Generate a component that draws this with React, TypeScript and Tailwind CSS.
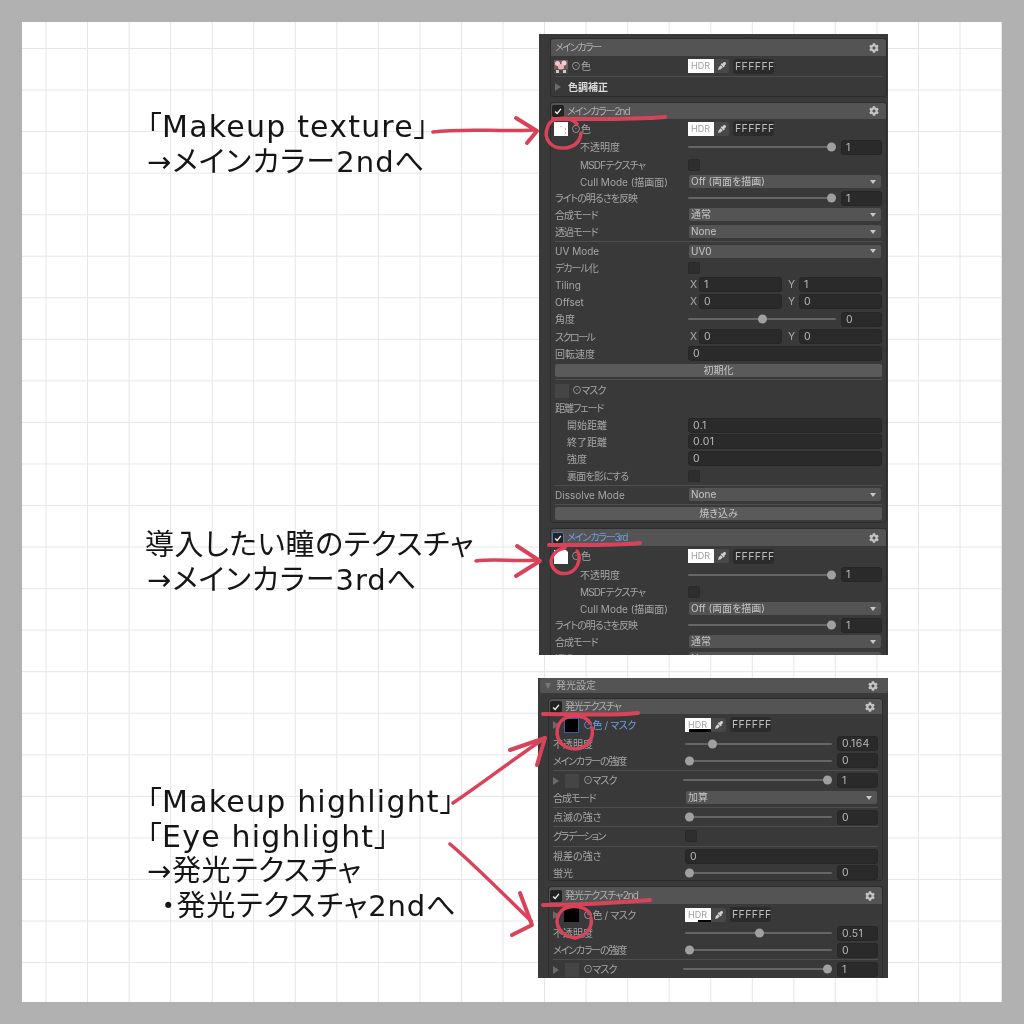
import React from "react";
import { FaCog, FaEyeDropper } from "react-icons/fa";

const field =
  "h-[15px] rounded-[3px] bg-[#2a2a2a] border border-[#262626] text-[#b8b8b8] text-[10.5px] leading-[13px] pl-[4px] tracking-[0.3px]";

function Num({ v }: { v: string }) {
  return <div className={`${field} w-[41px] shrink-0`}>{v}</div>;
}
function Slider({ p, v, wide }: { p: number; v: string; wide?: boolean }) {
  return (
    <div className={`flex items-center ${wide ? "-ml-[2px]" : ""}`}>
      <div className="relative flex-1 h-[2px] bg-[#666666] rounded-full">
        <div
          className="absolute top-1/2 -translate-y-1/2 w-[9px] h-[9px] rounded-full bg-[#a0a0a0]"
          style={{ left: `calc(${p} * (100% - 9px))` }}
        />
      </div>
      <div className="ml-[5px]">
        <Num v={v} />
      </div>
    </div>
  );
}
function Select({ v }: { v: string }) {
  return (
    <div className="mx-[1px] h-[13px] rounded-[2px] bg-[#545454] text-[#c6c6c6] text-[10px] leading-[13px] pl-[2px] flex items-center justify-between pr-[5px]">
      <span>{v}</span>
      <span className="block w-0 h-0 border-l-[3.5px] border-r-[3.5px] border-t-[4px] border-l-transparent border-r-transparent border-t-[#c8c8c8]" />
    </div>
  );
}
function Field({ v }: { v: string }) {
  return <div className={`${field} w-full`}>{v}</div>;
}
function Check() {
  return <div className="w-[12px] h-[12px] rounded-[2px] bg-[#2e2e2e] border border-[#2a2a2a]" />;
}
function XY({ x, y }: { x: string; y: string }) {
  return (
    <div className="flex items-center text-[#a8a8a8] text-[10.5px]">
      <span className="w-[11px] pl-[2px]">X</span>
      <div className={`${field} w-[83px]`}>{x}</div>
      <span className="w-[17px] pl-[6px]">Y</span>
      <div className={`${field} w-[83px]`}>{y}</div>
    </div>
  );
}
function Btn({ t }: { t: string }) {
  return (
    <div className="h-[13px] rounded-[2px] bg-[#5a5a5a] text-[#c6c6c6] text-[10px] leading-[13px] text-center">
      {t}
    </div>
  );
}
function Color({ partial }: { partial?: number }) {
  return (
    <div className="flex items-center">
      <div className="relative w-[26px] h-[14px] bg-white text-[#a0a0a0] text-[9px] leading-[14px] pl-[3px] overflow-hidden">
        HDR
        {partial === 1 && <div className="absolute left-[4px] right-0 bottom-0 h-[3px] bg-black" />}
        {partial === 2 && <div className="absolute left-[13px] right-0 bottom-0 h-[2px] bg-black" />}
      </div>
      <div className="w-[15px] h-[14px] bg-[#484848] rounded-r-[2px] flex items-center justify-center">
        <FaEyeDropper className="text-[#d0d0d0] w-[8px] h-[8px]" />
      </div>
      <div className="ml-[4px] w-[41px] h-[15px] rounded-[3px] bg-[#2b2b2b] text-[#bdbdbd] text-[10.5px] leading-[15px] pl-[2px] tracking-[0.4px]">
        FFFFFF
      </div>
    </div>
  );
}
function Sep({ h = "h-[2px]" }: { h?: string }) {
  return (
    <div className={`${h} flex items-center`}>
      <div className="w-full h-px bg-[#4e4e4e]" />
    </div>
  );
}
function Row({
  h = "h-[17px]",
  label,
  indent = "",
  children,
  lw = "w-[133px]",
}: {
  h?: string;
  label: React.ReactNode;
  indent?: string;
  children?: React.ReactNode;
  lw?: string;
}) {
  return (
    <div className={`${h} flex items-center`}>
      <div className={`${lw} ${indent} shrink-0 pt-[1px] text-[#a6a6a6] text-[10px] whitespace-nowrap flex items-center`}>
        {label}
      </div>
      <div className="flex-1 min-w-0">{children}</div>
    </div>
  );
}
function Header({
  t,
  h,
  check,
  blue,
  tr = "tracking-[-1.1px]",
}: {
  t: string;
  h: string;
  check?: boolean;
  blue?: boolean;
  tr?: string;
}) {
  return (
    <div className={`${h} bg-[#545454] rounded-t-[3px] flex items-center pl-[1px] pr-[7px]`}>
      {check && (
        <div
          className={`w-[12px] h-[12px] rounded-[2px] bg-[#222222] flex items-center justify-center ${
            blue ? "border border-[#4a76b8]" : ""
          }`}
        >
          <svg viewBox="0 0 12 12" className="w-[10px] h-[10px]">
            <path d="M2.5 6.5 L5 9 L9.5 3.5" fill="none" stroke="#f0f0f0" strokeWidth="1.6" />
          </svg>
        </div>
      )}
      <span className={`ml-[3px] text-[10px] ${tr} ${blue ? "text-[#6f9fe0]" : "text-[#b0b0b0]"}`}>{t}</span>
      <FaCog className="ml-auto text-[#c4c4c4] w-[10px] h-[10px]" />
    </div>
  );
}
function Sec({ children, head }: { children: React.ReactNode; head: React.ReactNode }) {
  return (
    <div className="border border-[#2c2c2c] rounded-[3px]">
      {head}
      <div className="px-[4px]">{children}</div>
    </div>
  );
}
function Swatch({ kind }: { kind: "tex" | "white" | "white2" | "black" | "blue" | "dim" }) {
  if (kind === "tex")
    return (
      <svg viewBox="0 0 14 14" className="w-[14px] h-[14px] shrink-0">
        <rect width="14" height="14" fill="#6b5f60" />
        <circle cx="3.5" cy="3.5" r="2.5" fill="#f3c9cf" />
        <circle cx="10" cy="3" r="2.5" fill="#f2d0d4" />
        <circle cx="7" cy="7" r="3" fill="#eab6be" />
        <rect y="9.5" width="14" height="4.5" fill="#4a4344" />
        <rect x="2" y="10" width="3" height="3" fill="#cfc7c7" />
        <rect x="9" y="10" width="3" height="3" fill="#d9c2c5" />
      </svg>
    );
  if (kind === "white")
    return (
      <svg viewBox="0 0 14 14" className="w-[14px] h-[14px] shrink-0">
        <rect width="14" height="14" fill="#ffffff" />
        <rect x="6" y="4" width="2" height="1" fill="#f0b4c0" />
        <rect x="11" y="6" width="1" height="2" fill="#f0a0b0" />
        <rect x="11" y="10" width="1" height="2" fill="#f0a0b0" />
      </svg>
    );
  if (kind === "white2")
    return (
      <svg viewBox="0 0 14 14" className="w-[14px] h-[14px] shrink-0">
        <rect width="14" height="14" fill="#ffffff" />
        <path d="M12 0 L14 0 L14 2 Z" fill="#383838" />
      </svg>
    );
  if (kind === "black") return <div className="w-[15px] h-[14px] shrink-0 bg-black" />;
  if (kind === "blue") return <div className="w-[15px] h-[15px] shrink-0 bg-black border border-[#3a5fa8]" />;
  return <div className="w-[14px] h-[14px] shrink-0 bg-[#454545]" />;
}
function Tri() {
  return (
    <span className="block w-0 h-0 border-t-[4px] border-b-[4px] border-l-[6px] border-t-transparent border-b-transparent border-l-[#6a6a6a] shrink-0" />
  );
}
function SwatchLabel({ kind, text }: { kind: "tex" | "white" | "white2"; text: string }) {
  return (
    <span className="flex items-center -ml-[1px]">
      <Swatch kind={kind} />
      <span className="ml-[3px] text-[#a6a6a6]">⊙{text}</span>
    </span>
  );
}
function EmitLabel({ kind, blue }: { kind: "black" | "blue"; blue?: boolean }) {
  return (
    <span className="flex items-center">
      <Tri />
      <span className="ml-[5px]">
        <Swatch kind={kind} />
      </span>
      <span className={`ml-[4px] tracking-[-0.4px] ${blue ? "text-[#6f9fe0]" : "text-[#a6a6a6]"}`}>⊙色 / マスク</span>
    </span>
  );
}
function MaskLabel() {
  return (
    <span className="flex items-center">
      <Tri />
      <span className="ml-[6px]">
        <Swatch kind="dim" />
      </span>
      <span className="ml-[4px] tracking-[-0.8px]">⊙マスク</span>
    </span>
  );
}

const panelFont =
  "font-['Inter','Noto_Sans_CJK_JP',sans-serif] [font-feature-settings:'palt'] blur-[0.45px]";

function PanelA() {
  return (
    <div
      className={`absolute left-[539px] top-[34px] w-[349px] h-[621px] overflow-hidden bg-[#393939] pt-[4px] pl-[11px] pr-[1px] ${panelFont}`}
    >
      <Sec head={<Header t="メインカラー" h="h-[17px]" tr="tracking-[-1.4px]" />}>
        <Row h="h-[20px]" label={<SwatchLabel kind="tex" text="色" />}>
          <Color />
        </Row>
        <Sep h="h-px" />
        <Row
          h="h-[19px]"
          label={
            <span className="flex items-center text-[#dcdcdc] font-bold">
              <Tri />
              <span className="ml-[7px]">色調補正</span>
            </span>
          }
        />
      </Sec>
      <div className="mt-[5px]">
        <Sec head={<Header t="メインカラー2nd" h="h-[16px]" check />}>
          <Row h="h-[19px]" label={<SwatchLabel kind="white" text="色" />}>
            <Color />
          </Row>
          <Row h="h-[18px]" indent="pl-[25px]" label="不透明度">
            <Slider p={1} v="1" />
          </Row>
          <Row indent="pl-[25px] tracking-[-0.8px]" label="MSDFテクスチャ">
            <Check />
          </Row>
          <Row indent="pl-[25px]" label="Cull Mode (描画面)">
            <Select v="Off (両面を描画)" />
          </Row>
          <Row h="h-[16px]" indent="tracking-[-1px]" label="ライトの明るさを反映">
            <Slider p={1} v="1" />
          </Row>
          <Row indent="tracking-[-0.9px]" label="合成モード">
            <Select v="通常" />
          </Row>
          <Row indent="tracking-[-0.9px]" label="透過モード">
            <Select v="None" />
          </Row>
          <Sep />
          <Row h="h-[18px]" label="UV Mode">
            <Select v="UV0" />
          </Row>
          <Row h="h-[16px]" indent="tracking-[-1px]" label="デカール化">
            <Check />
          </Row>
          <Row label="Tiling">
            <XY x="1" y="1" />
          </Row>
          <Row label="Offset">
            <XY x="0" y="0" />
          </Row>
          <Row h="h-[18px]" label="角度">
            <Slider p={0.5} v="0" />
          </Row>
          <Row indent="tracking-[-1.5px]" label="スクロール">
            <XY x="0" y="0" />
          </Row>
          <Row label="回転速度">
            <Field v="0" />
          </Row>
          <div className="h-[16px] flex items-center">
            <div className="w-full">
              <Btn t="初期化" />
            </div>
          </div>
          <Sep h="h-[3px]" />
          <Row
            h="h-[18px]"
            label={
              <span className="flex items-center">
                <Swatch kind="dim" />
                <span className="ml-[3px] tracking-[-0.8px]">⊙マスク</span>
              </span>
            }
          />
          <Row h="h-[18px]" indent="tracking-[-1px]" label="距離フェード" />
          <Row h="h-[16px]" indent="pl-[12px]" label="開始距離">
            <Field v="0.1" />
          </Row>
          <Row indent="pl-[12px]" label="終了距離">
            <Field v="0.01" />
          </Row>
          <Row indent="pl-[12px]" label="強度">
            <Field v="0" />
          </Row>
          <Row indent="pl-[12px] tracking-[-0.8px]" label="裏面を影にする">
            <Check />
          </Row>
          <Sep />
          <Row label="Dissolve Mode">
            <Select v="None" />
          </Row>
          <Sep />
          <div className="h-[17px] flex items-center">
            <div className="w-full">
              <Btn t="焼き込み" />
            </div>
          </div>
        </Sec>
      </div>
      <div className="mt-[5px]">
        <Sec head={<Header t="メインカラー3rd" h="h-[17px]" check blue />}>
          <Row h="h-[20px]" label={<SwatchLabel kind="white2" text="色" />}>
            <Color />
          </Row>
          <Row indent="pl-[25px]" label="不透明度">
            <Slider p={1} v="1" />
          </Row>
          <Row indent="pl-[25px] tracking-[-0.8px]" label="MSDFテクスチャ">
            <Check />
          </Row>
          <Row indent="pl-[25px]" label="Cull Mode (描画面)">
            <Select v="Off (両面を描画)" />
          </Row>
          <Row h="h-[16px]" indent="tracking-[-1px]" label="ライトの明るさを反映">
            <Slider p={1} v="1" />
          </Row>
          <Row indent="tracking-[-0.9px]" label="合成モード">
            <Select v="通常" />
          </Row>
          <Row indent="tracking-[-0.9px]" label="透過モード">
            <Select v="None" />
          </Row>
        </Sec>
      </div>
    </div>
  );
}

function PanelB() {
  return (
    <div
      className={`absolute left-[538px] top-[678px] w-[350px] h-[300px] overflow-hidden bg-[#393939] pl-[10px] pr-[5px] ${panelFont}`}
    >
      <div className="-ml-[8px] -mr-[5px] h-[15px] bg-[#545454] rounded-[2px] flex items-center pl-[5px] pr-[10px]">
        <span className="block w-0 h-0 border-l-[3.5px] border-r-[3.5px] border-t-[6px] border-l-transparent border-r-transparent border-t-[#777777]" />
        <span className="ml-[5px] text-[10px] text-[#b0b0b0]">発光設定</span>
        <FaCog className="ml-auto text-[#c4c4c4] w-[10px] h-[10px]" />
      </div>
      <div className="mt-[5px]">
        <Sec head={<Header t="発光テクスチャ" h="h-[15px]" check tr="tracking-[-1.2px]" />}>
          <Row h="h-[21px]" lw="w-[132px]" label={<EmitLabel kind="blue" blue />}>
            <Color partial={1} />
          </Row>
          <Row lw="w-[132px]" label="不透明度">
            <Slider p={0.17} v="0.164" />
          </Row>
          <Row lw="w-[132px]" indent="tracking-[-1.2px]" label="メインカラーの強度">
            <Slider p={0} v="0" />
          </Row>
          <Sep />
          <Row h="h-[18px]" lw="w-[132px]" label={<MaskLabel />}>
            <Slider p={1} v="1" wide />
          </Row>
          <Row lw="w-[132px]" indent="tracking-[-0.9px]" label="合成モード">
            <Select v="加算" />
          </Row>
          <Sep />
          <Row h="h-[18px]" lw="w-[132px]" label="点滅の強さ">
            <Slider p={0} v="0" />
          </Row>
          <Sep h="h-px" />
          <Row h="h-[18px]" lw="w-[132px]" indent="tracking-[-1.5px]" label="グラデーション">
            <Check />
          </Row>
          <Sep />
          <Row h="h-[18px]" lw="w-[132px]" label="視差の強さ">
            <Field v="0" />
          </Row>
          <Row h="h-[15px]" lw="w-[132px]" label="蛍光">
            <Slider p={0} v="0" />
          </Row>
        </Sec>
      </div>
      <div className="mt-[5px]">
        <Sec head={<Header t="発光テクスチャ2nd" h="h-[17px]" check tr="tracking-[-0.9px]" />}>
          <Row h="h-[21px]" lw="w-[132px]" label={<EmitLabel kind="black" />}>
            <Color partial={2} />
          </Row>
          <Row h="h-[16px]" lw="w-[132px]" label="不透明度">
            <Slider p={0.51} v="0.51" />
          </Row>
          <Row h="h-[18px]" lw="w-[132px]" indent="tracking-[-1.2px]" label="メインカラーの強度">
            <Slider p={0} v="0" />
          </Row>
          <Sep h="h-px" />
          <Row h="h-[18px]" lw="w-[132px]" label={<MaskLabel />}>
            <Slider p={1} v="1" wide />
          </Row>
        </Sec>
      </div>
    </div>
  );
}

const bigText =
  "absolute left-[147px] text-[29px] leading-[34.5px] tracking-[0.6px] text-[#151515] whitespace-nowrap font-['DejaVu_Sans','Noto_Sans_CJK_JP',sans-serif] [font-feature-settings:'palt'] blur-[0.3px]";

function Lat({ children }: { children: React.ReactNode }) {
  return <span className="text-[30px] tracking-[1.2px]">{children}</span>;
}

function Pen() {
  const s = {
    fill: "none",
    stroke: "#d8435a",
    strokeWidth: 3.5,
    strokeLinecap: "round" as const,
    strokeLinejoin: "round" as const,
  };
  return (
    <svg viewBox="0 0 1024 1024" className="absolute inset-0 w-[1024px] h-[1024px] pointer-events-none blur-[0.4px]">
      <path {...s} d="M433 132 C465 128 500 132 534 130" />
      <path {...s} strokeWidth={4} d="M516 118 L537 131 L527 143" />
      <path {...s} d="M553 119 C585 119 630 120 665 117" strokeWidth={4} />
      <path {...s} d="M577 124 C570 116 552 116 548 126 C542 140 552 149 565 148 C574 147 580 142 581 133" />

      <path {...s} d="M476 561 C495 558 515 562 536 560" />
      <path {...s} strokeWidth={4} d="M517 546 L540 561 L516 576" />
      <path {...s} d="M549 545 C580 545 610 546 640 543" strokeWidth={4} />
      <path {...s} d="M565 548 C552 550 548 562 554 569 C560 576 572 575 577 566 C580 560 580 555 577 551" />

      <path {...s} d="M453 803 C480 785 515 758 545 738" />
      <path {...s} strokeWidth={4} d="M510 750 L545 738 L537 765" />
      <path {...s} d="M543 714 C575 714 610 716 638 713" strokeWidth={4} />
      <path {...s} d="M590 723 C585 714 565 713 559 724 C553 738 562 749 576 749 C588 748 594 738 592 728" />

      <path {...s} d="M450 844 C478 868 505 896 531 921" />
      <path {...s} strokeWidth={4} d="M520 893 L532 925 L512 935" />
      <path {...s} d="M543 905 C580 905 615 903 650 900" strokeWidth={4} />
      <path {...s} d="M590 914 C585 905 565 903 559 914 C553 926 562 936 575 938 C586 936 593 928 591 918" />
    </svg>
  );
}

export default function App() {
  return (
    <div className="relative w-[1024px] h-[1024px] bg-[#b1b1b1] p-[22px] overflow-hidden">
      <div className="w-full h-full bg-white bg-[linear-gradient(to_right,#e6e6e6_1px,transparent_1px),linear-gradient(to_bottom,#e6e6e6_1px,transparent_1px)] bg-[size:41.55px_41.55px] bg-[position:23.5px_26px]" />
      <div className={`${bigText} top-[110px]`}>
        <div>「<Lat>Makeup texture</Lat>」</div>
        <div className="tracking-[1.1px]">→メインカラー2ndへ</div>
      </div>
      <div className={`${bigText} top-[528px]`}>
        <div className="-ml-[2px]">導入したい瞳のテクスチャ</div>
        <div className="tracking-[1px]">→メインカラー3rdへ</div>
      </div>
      <div className={`${bigText} top-[785px]`}>
        <div>「<Lat>Makeup highlight</Lat>」</div>
        <div>「<Lat>Eye highlight</Lat>」</div>
        <div>→発光テクスチャ</div>
        <div className="pl-[14px] tracking-[0.9px]">・発光テクスチャ2ndへ</div>
      </div>
      <PanelA />
      <PanelB />
      <Pen />
    </div>
  );
}
